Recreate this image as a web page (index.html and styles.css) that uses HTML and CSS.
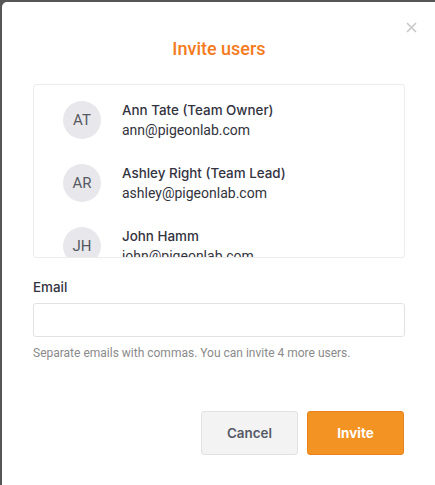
FILE: index.html
```html
<!DOCTYPE html>
<html>
<head>
<meta charset="utf-8">
<link rel="stylesheet" href="styles.css">
</head>
<body>
<div class="modal">
  <button class="close" aria-label="Close">
    <svg width="11" height="11" viewBox="0 0 11 11"><path d="M1 1L10 10M10 1L1 10" stroke="#c8c8c8" stroke-width="1.6" fill="none"/></svg>
  </button>
  <h1 class="title">Invite users</h1>
  <div class="members">
    <div class="member">
      <div class="avatar">AT</div>
      <div class="info">
        <div class="name">Ann Tate (Team Owner)</div>
        <div class="email">ann@pigeonlab.com</div>
      </div>
    </div>
    <div class="member">
      <div class="avatar">AR</div>
      <div class="info">
        <div class="name">Ashley Right (Team Lead)</div>
        <div class="email">ashley@pigeonlab.com</div>
      </div>
    </div>
    <div class="member">
      <div class="avatar">JH</div>
      <div class="info">
        <div class="name">John Hamm</div>
        <div class="email">john@pigeonlab.com</div>
      </div>
    </div>
  </div>
  <label class="label">Email</label>
  <input class="input" type="text">
  <p class="help">Separate emails with commas. You can invite 4 more users.</p>
  <div class="actions">
    <button class="btn cancel">Cancel</button>
    <button class="btn invite">Invite</button>
  </div>
</div>
</body>
</html>
```
FILE: styles.css
```css
html, body {
  margin: 0;
  padding: 0;
  height: 100%;
  background: #565656;
}
body {
  font-family: Roboto, "Liberation Sans", sans-serif;
  padding: 2px 0 0 2px;
  box-sizing: border-box;
}
.modal {
  position: relative;
  background: #fff;
  border-radius: 5px 0 0 0;
  height: 100%;
  box-sizing: border-box;
  padding: 35px 30px 0 31px;
  display: flex;
  flex-direction: column;
}
.close {
  position: absolute;
  top: 20px;
  right: 18px;
  border: 0;
  background: none;
  padding: 0;
  width: 11px;
  height: 11px;
  display: block;
}
.close svg { display: block; }
.title {
  margin: 0;
  text-align: center;
  font-family: Roboto, sans-serif;
  font-size: 18px;
  line-height: 24px;
  font-weight: 500;
  color: #f47a20;
}
.members {
  margin-top: 23px;
  border: 1px solid #ececec;
  border-radius: 3px;
  height: 174px;
  box-sizing: border-box;
  overflow: hidden;
  padding: 15px 29px 0;
  display: flex;
  flex-direction: column;
  gap: 23px;
  flex-shrink: 0;
}
.member {
  display: flex;
  align-items: center;
  gap: 21px;
  flex-shrink: 0;
}
.avatar {
  width: 38px;
  height: 38px;
  border-radius: 50%;
  background: #e8e8ec;
  color: #555962;
  font-size: 15px;
  display: flex;
  align-items: center;
  justify-content: center;
  flex-shrink: 0;
}
.info {
  display: flex;
  flex-direction: column;
}
.name {
  font-family: Inter, Roboto, sans-serif;
  font-size: 13.4px;
  line-height: 20px;
  font-weight: 500;
  color: #33333f;
}
.email {
  font-size: 14px;
  line-height: 20px;
  color: #33333d;
}
.label {
  margin-top: 19px;
  font-family: Inter, Roboto, sans-serif;
  font-size: 13.4px;
  line-height: 20px;
  font-weight: 500;
  color: #33333f;
}
.input {
  margin-top: 6px;
  height: 34px;
  box-sizing: border-box;
  border: 1px solid #e2e2e2;
  border-radius: 3px;
  width: 100%;
  outline: none;
}
.help {
  margin: 8px 0 0;
  font-size: 12px;
  line-height: 16px;
  color: #8a8a8a;
}
.actions {
  margin-top: 50px;
  display: flex;
  justify-content: flex-end;
  gap: 9px;
  padding-right: 1px;
}
.btn {
  width: 97px;
  height: 44px;
  border-radius: 3px;
  font-family: Inter, Roboto, sans-serif;
  font-size: 13.4px;
  font-weight: 500;
  box-sizing: border-box;
}
.cancel {
  background: #f3f3f4;
  border: 1px solid #e2e2e4;
  color: #555a66;
  font-weight: 600;
}
.invite {
  background: #f39324;
  border: 1px solid #e8821c;
  color: #fff;
  font-weight: 700;
}
```
